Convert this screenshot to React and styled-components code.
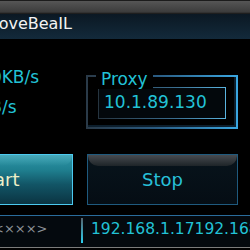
import styled, { createGlobalStyle } from 'styled-components';

const GlobalStyle = createGlobalStyle`
    html, body{
        margin: 0;
        background: #000;
        overflow: hidden;
    }
    body{
        font-family: "DejaVu Sans", "Liberation Sans", sans-serif;
    }
`

const Window = styled.div`
    display: flex;
    flex-direction: column;
    width: 340px;
    margin-left: -90px;
    height: 250px;
    background: #000;
`

const TitleChrome = styled.div`
    height: 14px;
    background: linear-gradient(#1c1c1c 0 1px, #565656 1px, #3c3c3c 12px, #141414 14px);
`

const TitleBand = styled.div`
    height: 25px;
    padding-left: 80px;
    background: linear-gradient(#0b1823, #132a3b);
    color: #f3f3f3;
    font-size: 16px;
    line-height: 20px;
`

const Main = styled.div`
    display: flex;
    padding: 0 12px;
`

const SpeedCol = styled.div`
    flex: 1;
    display: flex;
    flex-direction: column;
    gap: 10px;
    padding: 28px 0 0 12px;
`

const SpeedText = styled.div`
    padding-left: ${({ $indent }) => $indent || 0}px;
    color: #22c2d6;
    font-size: 17px;
    line-height: 20px;
    white-space: nowrap;
`

const GroupBox = styled.div`
    position: relative;
    box-sizing: border-box;
    width: 152px;
    margin-top: 36px;
    padding: 10px 10px 8px;
    border: 2px solid transparent;
    border-image: linear-gradient(to right, #2a3a48, #2a5a80 45%, #3aa6e0 100%) 1;
    box-shadow: inset -2px -2px 0 #0c1e2c;
`

const GroupLabel = styled.span`
    position: absolute;
    top: -8.5px;
    left: 8px;
    padding: 0 5px;
    background: #000;
    color: #22c2d6;
    font-size: 17px;
    line-height: 20px;
`

const ProxyField = styled.div`
    box-sizing: border-box;
    height: 32px;
    padding: 0 5px;
    border: 1px solid transparent;
    border-image: linear-gradient(to right, #26343f, #3a6e90 60%, #5ab4e0 100%) 1;
    background: #03080c;
    color: #22c2d6;
    font-size: 17px;
    line-height: 28px;
`

const ButtonRow = styled.div`
    display: grid;
    grid-template-columns: 151px 151px;
    gap: 14px;
    margin: 25px 12px 0;
`

const Button = styled.button`
    position: relative;
    box-sizing: border-box;
    height: 51px;
    padding: 0;
    font-family: "DejaVu Sans", sans-serif;
    font-size: 18px;
    border: 1px solid ${({ $active }) => $active ? '#4ccaf0' : '#1f5a7e'};
    color: ${({ $active }) => $active ? '#eef0c8' : '#28c0d8'};
    background: ${({ $active }) => $active
        ? 'linear-gradient(#2e95a8 0%, #1f8090 30%, #125566 60%, #0b3442 100%)'
        : 'linear-gradient(#08141c, #050d14)'};
    &::before{
        content: '';
        position: absolute;
        top: 0;
        left: 0;
        right: 0;
        height: 11px;
        border-radius: 0 0 10px 10px;
        background: ${({ $active }) => $active
            ? 'linear-gradient(rgba(120,210,220,0.35), rgba(120,210,220,0))'
            : 'linear-gradient(#474b50, #1e2428)'};
    }
    span{
        position: relative;
    }
`

const StatusBar = styled.div`
    display: flex;
    box-sizing: border-box;
    height: 33px;
    margin-top: 10px;
    border-top: 1px solid #2a6c9c;
    border-bottom: 1px solid #7c7c7c;
    background: #04090e;
`

const StatusCell = styled.div`
    box-sizing: border-box;
    padding-top: 3px;
    white-space: nowrap;
    overflow: hidden;
    line-height: 20px;
    ${({ $main }) => $main
        ? 'flex: 1; padding-left: 8px; color: #22c2d6; font-size: 15.5px;'
        : 'width: 171px; padding-left: 83px; color: #8c9298; font-size: 13px;'}
`

const Divider = styled.div`
    width: 2px;
    margin: 2px 0 4px;
    background: linear-gradient(#56626c, #2ad0f0);
`

export default function App(){
    return(
        <>
            <GlobalStyle />
            <Window>
                <TitleChrome />
                <TitleBand>LoveBeaIL</TitleBand>
                <Main>
                    <SpeedCol>
                        <SpeedText $indent={3}>Down:0KB/s</SpeedText>
                        <SpeedText>Up: 0KB/s</SpeedText>
                    </SpeedCol>
                    <GroupBox>
                        <GroupLabel>Proxy</GroupLabel>
                        <ProxyField>10.1.89.130</ProxyField>
                    </GroupBox>
                </Main>
                <ButtonRow>
                    <Button $active><span>Start</span></Button>
                    <Button><span>Stop</span></Button>
                </ButtonRow>
                <StatusBar>
                    <StatusCell>&lt;×××&gt;</StatusCell>
                    <Divider />
                    <StatusCell $main>192.168.1.17192.168.1.17</StatusCell>
                </StatusBar>
            </Window>
        </>
    )
}
